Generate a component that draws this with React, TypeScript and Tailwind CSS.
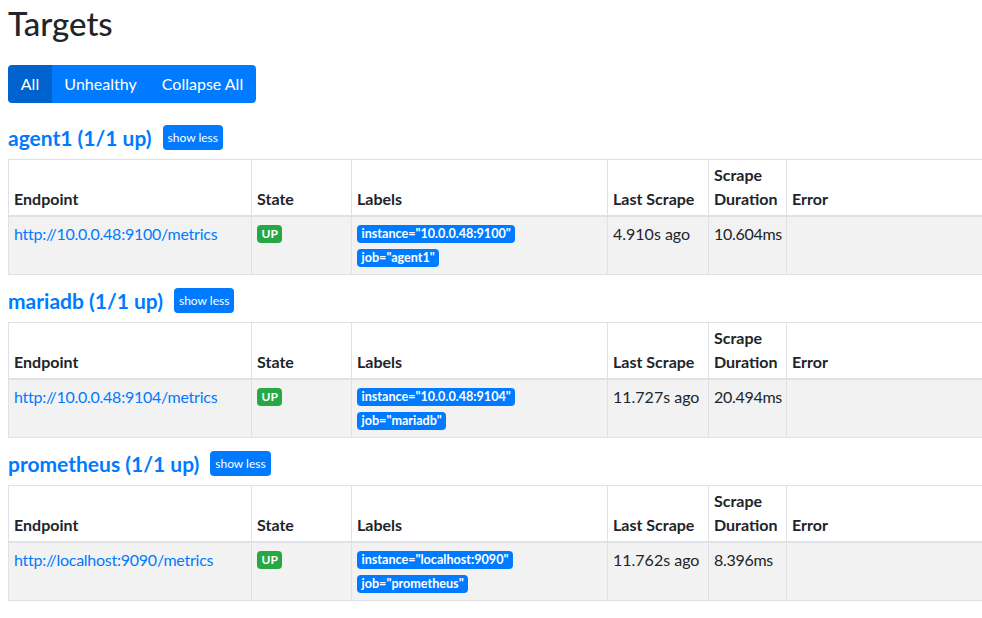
const targets = [
  {
    job: "agent1",
    endpoint: "http://10.0.0.48:9100/metrics",
    instance: "10.0.0.48:9100",
    lastScrape: "4.910s ago",
    duration: "10.604ms",
  },
  {
    job: "mariadb",
    endpoint: "http://10.0.0.48:9104/metrics",
    instance: "10.0.0.48:9104",
    lastScrape: "11.727s ago",
    duration: "20.494ms",
  },
  {
    job: "prometheus",
    endpoint: "http://localhost:9090/metrics",
    instance: "localhost:9090",
    lastScrape: "11.762s ago",
    duration: "8.396ms",
  },
];

function Badge({ children, green }: { children: React.ReactNode; green?: boolean }) {
  return (
    <span
      className={
        "inline-block rounded-[4px] px-[4.5px] py-[3px] font-bold leading-none whitespace-nowrap text-white " +
        (green ? "bg-[#28a745] text-[12px]" : "bg-[#007bff] text-[12.6px]")
      }
    >
      {children}
    </span>
  );
}

function TargetTable({ t }: { t: (typeof targets)[number] }) {
  const th =
    "border-r border-b-2 border-[#dee2e6] px-[5px] pt-[3px] pb-[4px] text-left align-bottom font-bold leading-6 whitespace-nowrap";
  const td = "border-r border-b border-[#dee2e6] px-[5px] pt-[5px] pb-[4px] align-top leading-6";
  return (
    <table className="mb-[13px] w-[1100px] table-fixed border-separate border-spacing-0 border-t border-[#dee2e6] text-[16px] text-[#212529]">
      <thead>
        <tr>
          <th className={th + " w-[244px] border-l"}>Endpoint</th>
          <th className={th + " w-[100px]"}>State</th>
          <th className={th + " w-[256px]"}>Labels</th>
          <th className={th + " w-[101px]"}>Last Scrape</th>
          <th className={th + " w-[78px]"}>
            Scrape
            <br />
            Duration
          </th>
          <th className={th}>Error</th>
        </tr>
      </thead>
      <tbody className="bg-[#f2f2f2]">
        <tr>
          <td className={td + " border-l"}>
            <a className="tracking-[-0.25px] text-[#007bff]">{t.endpoint}</a>
          </td>
          <td className={td}>
            <div className="flex h-6 items-center">
              <Badge green>UP</Badge>
            </div>
          </td>
          <td className={td}>
            <div className="flex h-6 items-center">
              <Badge>instance="{t.instance}"</Badge>
            </div>
            <div className="flex h-6 items-center">
              <Badge>job="{t.job}"</Badge>
            </div>
          </td>
          <td className={td + " whitespace-nowrap"}>{t.lastScrape}</td>
          <td className={td + " whitespace-nowrap tracking-[-0.3px]"}>{t.duration}</td>
          <td className={td}></td>
        </tr>
      </tbody>
    </table>
  );
}

export default function App() {
  return (
    <div className="min-h-screen overflow-hidden bg-white pl-[8px] font-['Lato',sans-serif] text-[#212529]">
      <h2 className="mt-[4px] mb-[23px] text-[33px] leading-[38px] font-medium">Targets</h2>

      <div className="mb-[22px] flex h-[38px] text-[16px] text-white">
        <button className="w-[44px] rounded-l-[4px] bg-[#0062cc]">All</button>
        <button className="w-[97px] bg-[#007bff]">Unhealthy</button>
        <button className="w-[107px] rounded-r-[4px] bg-[#007bff]">Collapse All</button>
      </div>

      {targets.map((t) => (
        <div key={t.job}>
          <div className="mb-[9px] flex h-[25px] items-center">
            <span className="text-[21px] font-bold text-[#007bff]">
              {t.job} (1/1 up)
            </span>
            <button className="ml-[11px] h-[25px] rounded-[4px] bg-[#007bff] px-[5px] text-[12px] text-white">
              show less
            </button>
          </div>
          <TargetTable t={t} />
        </div>
      ))}
    </div>
  );
}
